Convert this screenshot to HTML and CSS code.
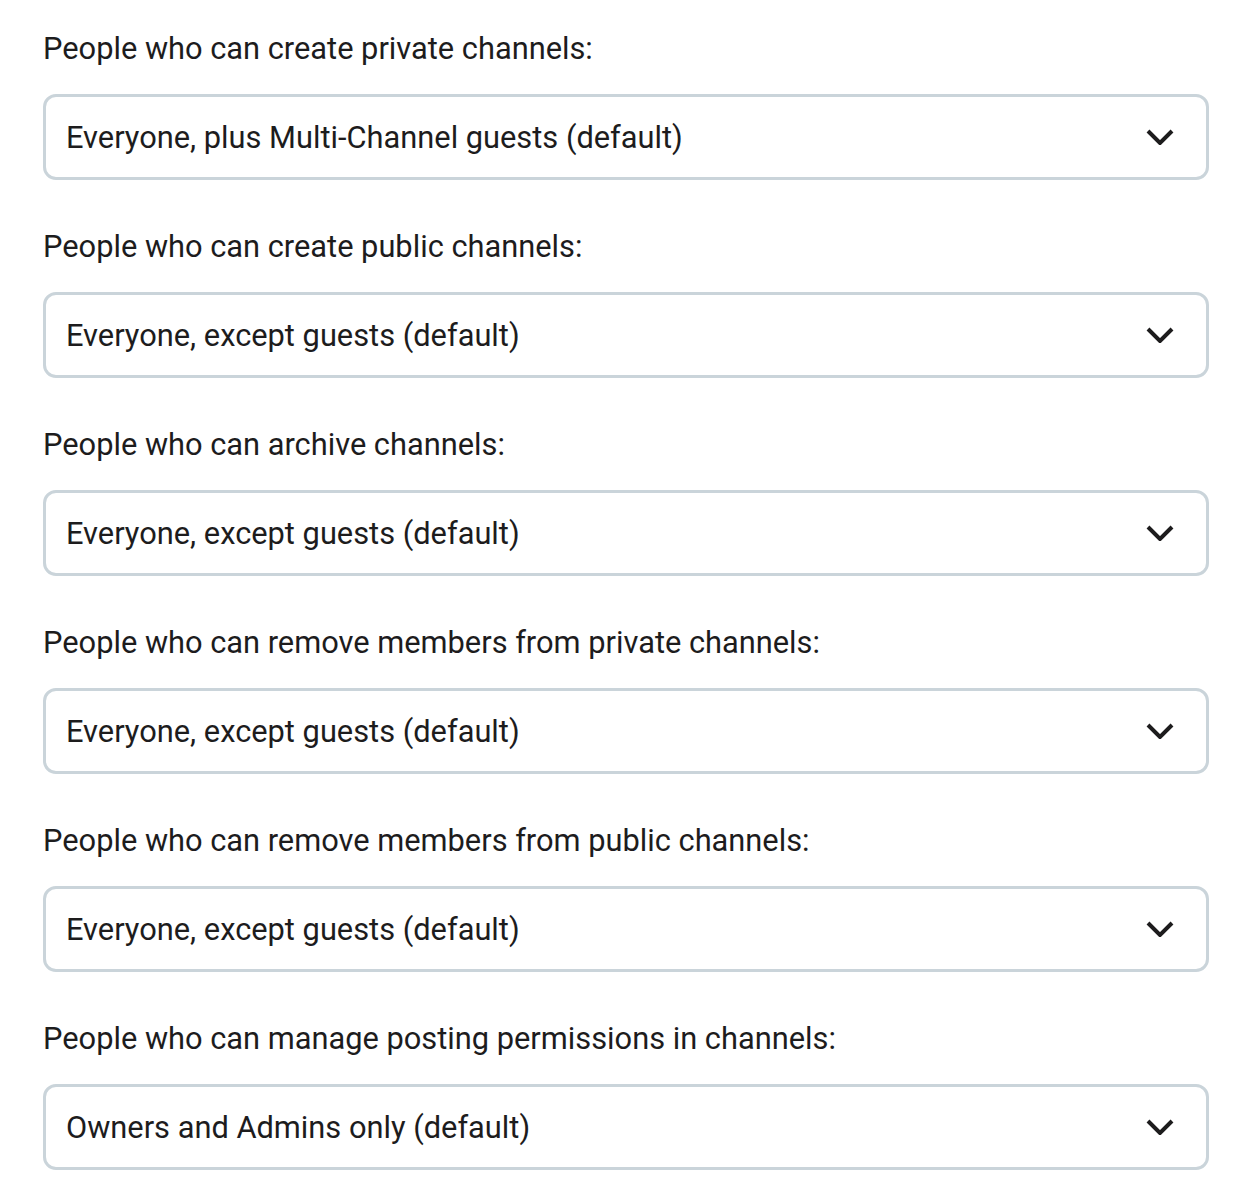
FILE: index.html
```html
<!DOCTYPE html>
<html lang="en">
  <head>
  <link rel="stylesheet" href="styles.css">
  </head>
  <body>
    <div class="container">
      <div class="form-control">
        <label>People who can create private channels:</label>
        <div class="select">
          <span>Everyone, plus Multi-Channel guests (default)</span>
          <svg class="chevron" viewBox="0 0 28 16"><path d="M2 2 L14 14 L26 2"/></svg>
        </div>
      </div>
      <div class="form-control">
        <label>People who can create public channels:</label>
        <div class="select">
          <span>Everyone, except guests (default)</span>
          <svg class="chevron" viewBox="0 0 28 16"><path d="M2 2 L14 14 L26 2"/></svg>
        </div>
      </div>
      <div class="form-control">
        <label>People who can archive channels:</label>
        <div class="select">
          <span>Everyone, except guests (default)</span>
          <svg class="chevron" viewBox="0 0 28 16"><path d="M2 2 L14 14 L26 2"/></svg>
        </div>
      </div>
      <div class="form-control">
        <label>People who can remove members from private channels:</label>
        <div class="select">
          <span>Everyone, except guests (default)</span>
          <svg class="chevron" viewBox="0 0 28 16"><path d="M2 2 L14 14 L26 2"/></svg>
        </div>
      </div>
      <div class="form-control">
        <label>People who can remove members from public channels:</label>
        <div class="select">
          <span>Everyone, except guests (default)</span>
          <svg class="chevron" viewBox="0 0 28 16"><path d="M2 2 L14 14 L26 2"/></svg>
        </div>
      </div>
      <div class="form-control">
        <label>People who can manage posting permissions in channels:</label>
        <div class="select">
          <span>Owners and Admins only (default)</span>
          <svg class="chevron" viewBox="0 0 28 16"><path d="M2 2 L14 14 L26 2"/></svg>
        </div>
      </div>
    </div>
  </body>
</html>
```

FILE: styles.css
```css
html, body { padding: 0; margin: 0; background: #fff; }
body { color: #1d1c1d; font: 30.8px/36px Roboto, "Liberation Sans", sans-serif; }
.container { padding: 30px 49px 0 43px; }
.form-control { margin-bottom: 48px; }
.form-control label { display: block; height: 35px; padding-top: 1px; margin-bottom: 28px; }
.select {
  box-sizing: border-box; height: 86px;
  display: flex; align-items: center; justify-content: space-between;
  padding: 0 32px 0 20px;
  border: 3px solid #cad4da; border-radius: 13px;
  background: #fff;
}
.select span { padding-top: 2px; }
.chevron { width: 28px; height: 16px; fill: none; stroke: #1d1c1d; stroke-width: 4; }
```
